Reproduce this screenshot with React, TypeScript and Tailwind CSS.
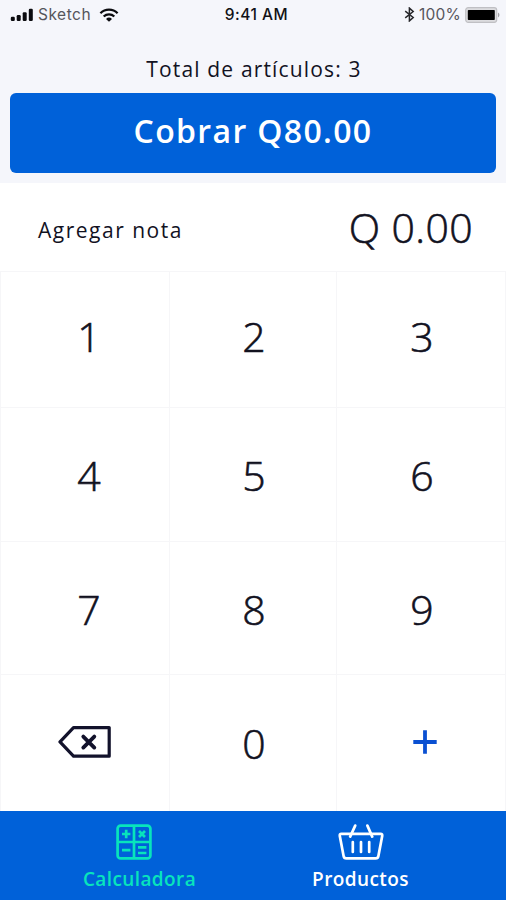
import { useState } from "react"
import clsx from "clsx"

const KEYS = ["1", "2", "3", "4", "5", "6", "7", "8", "9", "del", "0", "add"]

const SignalIcon = () => (
  <svg width="24" height="14" viewBox="0 0 24 14" fill="#0b0b0f">
    <rect x="0.8" y="8.8" width="4" height="4.2" rx="1.2" />
    <rect x="6.7" y="7" width="4" height="6" rx="1.2" />
    <rect x="12.7" y="4.2" width="4" height="8.8" rx="1.2" />
    <rect x="18.8" y="0.8" width="4" height="12.2" rx="1.2" />
  </svg>
)

const WifiIcon = () => (
  <svg width="20" height="14" viewBox="0 0 20 14" fill="none" stroke="#0b0b0f" strokeWidth="2.3">
    <path d="M1.4 5.2a12.3 12.3 0 0 1 17.2 0" />
    <path d="M4.7 8.5a7.6 7.6 0 0 1 10.6 0" />
    <path d="M7 10.9a4.3 4.3 0 0 1 6 0L10 13.8z" fill="#0b0b0f" stroke="none" />
  </svg>
)

const BluetoothIcon = () => (
  <svg width="11" height="15" viewBox="0 0 11 15" fill="none" stroke="#26262a" strokeWidth="1.5">
    <path d="M1.2 4.2l8 6.3-3.8 3.4V1.1l3.8 3.4-8 6.3" />
  </svg>
)

const BatteryIcon = () => (
  <svg width="36" height="16" viewBox="0 0 36 16">
    <rect x="0.7" y="0.7" width="31" height="14.6" rx="2.5" fill="#dcdcdf" stroke="#c0c0c4" strokeWidth="1.2" />
    <rect x="2.8" y="3" width="27" height="10" rx="0.8" fill="#000" />
    <path d="M33.2 5.6c1.6.8 1.6 4 0 4.8z" fill="#8d8d92" />
  </svg>
)

const BackspaceIcon = () => (
  <svg width="54" height="34" viewBox="0 0 54 34" fill="none" stroke="#12122b" strokeWidth="3.2">
    <path d="M15.5 2.6H51.2V31.2H15.5L2 16.9z" strokeLinejoin="round" />
    <path d="M25.3 11.6l11 11M36.3 11.6l-11 11" strokeWidth="3.8" strokeLinecap="round" />
  </svg>
)

const PlusIcon = () => (
  <svg width="24" height="24" viewBox="0 0 24 24" stroke="#0a50d2" strokeWidth="3.8">
    <path d="M12 0.3v23.4M0.3 12h23.4" />
  </svg>
)

const CalculatorIcon = () => (
  <svg width="36" height="36" viewBox="0 0 36 36" fill="none" stroke="currentColor" strokeWidth="2.7">
    <rect x="1.6" y="1.6" width="32.8" height="32.8" rx="3" />
    <path d="M18 2v32M2 18h32" />
    <path d="M6 10h8.4M10.2 5.8v8.4M23 7l6 6M29 7l-6 6M6 26.2h8.4M22 23.4h8.4M22 29h8.4" />
  </svg>
)

const BasketIcon = () => (
  <svg width="46" height="36" viewBox="0 0 46 36" fill="none" stroke="currentColor" strokeWidth="2.7" strokeLinecap="round" strokeLinejoin="round">
    <path d="M3.4 9.8H42.6Q44.6 9.8 44.2 12L40.4 32Q40 34.4 37.6 34.4H8.4Q6 34.4 5.6 32L1.8 12Q1.4 9.8 3.4 9.8z" />
    <path d="M17.2 1.6L12.2 12.6M29.4 1.6L34.2 12.6" />
    <path d="M14.8 18v10M23 18v10M31.2 18v10" />
  </svg>
)

const StatusBar = () => (
  <div className="grid h-[29px] grid-cols-3 items-center pl-2.5 pr-[5px] font-['Inter',sans-serif] text-[15.5px] leading-[29px]">
    <div className="flex items-center">
      <SignalIcon />
      <span className="ml-1 mr-2 tracking-[0.5px] text-[#55555b]">Sketch</span>
      <WifiIcon />
    </div>
    <span className="pl-0.5 text-center text-[15.5px] font-medium tracking-[0.5px] text-[#111116]">9:41 AM</span>
    <div className="flex items-center justify-end">
      <BluetoothIcon />
      <span className="ml-1 mr-1 tracking-[0.2px] text-[#55555b]">100%</span>
      <BatteryIcon />
    </div>
  </div>
)

const App = () => {
  const [tab, setTab] = useState("calc")

  return (
    <div className="flex h-[900px] w-[506px] flex-col overflow-hidden bg-white font-['Open_Sans',sans-serif] text-[#12121f]">
      <header className="h-[183px] bg-[#f5f6fb] px-2.5">
        <div className="-mx-2.5">
          <StatusBar />
        </div>
        <p className="mt-6 h-8 pl-0.5 text-center text-[21px] leading-8 tracking-[1.15px]">Total de artículos: 3</p>
        <button className="mt-2 block h-20 w-full rounded-md bg-[#0061d9] pb-1 text-center text-[32px] font-semibold tracking-[1.35px] text-white">
          Cobrar Q80.00
        </button>
      </header>

      <div className="flex h-[88px] items-center justify-between pl-[38px] pr-[33px]">
        <button className="pt-2 text-[21px] tracking-[1.5px]">Agregar nota</button>
        <span className="pt-0.5 text-[41px] font-light tracking-[0.4px] [-webkit-text-stroke:0.6px_#12121f]">Q 0.00</span>
      </div>

      <div className="grid h-[540px] grid-cols-[169px_167px_169px] grid-rows-[136px_134px_133px_137px] border-l border-[#f6f6f8]">
        {KEYS.map((key, i) => (
          <button
            key={key}
            aria-label={key}
            className={clsx(
              "flex items-center justify-center border-r border-t border-[#f6f6f8] pt-0.5 text-[41px] font-light leading-none [-webkit-text-stroke:0.6px_#12121f]",
              i % 3 === 0 && i < 9 && "pl-2",
              i % 3 === 1 && "pl-0.5",
              i % 3 === 2 && "pl-0.5",
              key === "add" && "pl-[7px]",
              i < 3 && "pb-2",
              i > 8 && (key === "0" ? "pb-0.5" : "pb-[5px]")
            )}
          >
            {key === "del" ? <BackspaceIcon /> : key === "add" ? <PlusIcon /> : key}
          </button>
        ))}
      </div>

      <nav className="flex h-[89px] items-start bg-[#0061d9] pl-[30px] pr-[36px] pt-[13px] text-[19px] font-semibold tracking-[0.4px]">
        <button
          onClick={() => setTab("calc")}
          className={clsx("flex flex-1 flex-col items-center", tab === "calc" ? "text-[#08e4bc]" : "text-white")}
        >
          <span className="mr-3">
            <CalculatorIcon />
          </span>
          <span className="mt-[5px] leading-7">Calculadora</span>
        </button>
        <button
          onClick={() => setTab("products")}
          className={clsx("flex flex-1 flex-col items-center pl-0.5", tab === "products" ? "text-[#08e4bc]" : "text-white")}
        >
          <BasketIcon />
          <span className="mt-[5px] leading-7">Productos</span>
        </button>
      </nav>
    </div>
  )
}

export default App
